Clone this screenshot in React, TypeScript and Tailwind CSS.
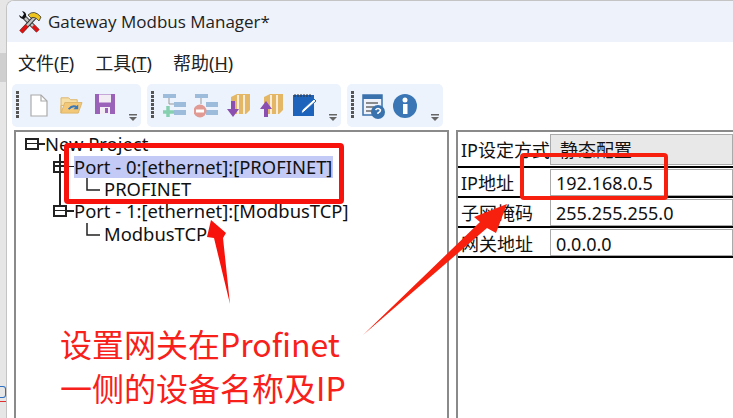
const cjk = '"Noto Sans", "Noto Sans CJK SC", sans-serif'

function Grip() {
  return (
    <div className="flex flex-col gap-[1.500px] shrink-0">
      {[0, 1, 2, 3, 4, 5, 6].map((i) => (
        <div key={i} className="w-[3px] h-[2.500px] bg-[#555]" />
      ))}
    </div>
  )
}

function More() {
  return (
    <svg viewBox="0 0 9 8" className="absolute right-[3px] bottom-[5px] w-[9px] h-[8px]">
      <rect x="0" y="0" width="8" height="1.500" fill="#666" />
      <path d="M0 3h8l-4 4z" fill="#666" />
    </svg>
  )
}

function Toolbar({ className, children }: { className: string; children: React.ReactNode }) {
  return (
    <div className={`relative flex items-start h-[43px] pl-[4px] pt-[7px] rounded-[5px] bg-[#ecf3fc] ${className}`}>
      <Grip />
      {children}
      <More />
    </div>
  )
}

function TreeBox() {
  return (
    <span className="relative inline-block w-[14px] h-[12px] border-2 border-[#222] shrink-0">
      <span className="absolute left-0 right-0 top-[2.500px] h-[1.500px] bg-[#222]" />
    </span>
  )
}

function Row({ label, value, first, last }: { label: string; value: string; first?: boolean; last?: boolean }) {
  return (
    <div className={`flex border-b-2 border-black items-stretch ${first ? 'h-[36px] pt-[2px] pb-[1px]' : 'h-[30px] pt-[1px]'}`}>
      <div className={`w-[92px] pl-[3px] text-[18px] leading-[24px] text-[#111] whitespace-nowrap self-center ${last ? 'pt-[3px]' : ''}`}>{label}</div>
      <div className={`flex-1 border border-[#aaa] text-[18px] leading-[24px] flex items-center text-[#111] ${first ? 'bg-[#e8e8e8] pl-[9px]' : 'pl-[5px]'} ${last ? 'pt-[3px]' : ''}`}>
        {value}
      </div>
    </div>
  )
}

export default function App() {
  return (
    <div className="relative w-[733px] h-[418px] overflow-hidden bg-[#e6e6e6] pl-[6px]" style={{ fontFamily: cjk }}>
      {/* Whatever sits behind the window on the left edge */}
      <div className="absolute left-0 top-[53px] w-[6px] h-[29px] bg-[#cfcfcf]" />
      <div className="absolute left-0 top-[386px] w-[6px] h-[12px] border-y border-r border-[#2f6fc0] rounded-r-[3px]" />
      <div className="absolute left-0 top-[401px] w-[6px] h-[1px] bg-[#e03030]" />

      <div className="relative w-[727px] h-[418px] bg-white rounded-tl-[8px] overflow-hidden flex flex-col border-l border-t border-[#c4c4c4]">
        {/* Title bar */}
        <div className="h-[41px] shrink-0 bg-[#eef3fb] flex items-center pl-[11px] gap-[6px]">
          <svg viewBox="0 0 24 24" className="w-[24px] h-[24px]">
            <path d="M6 7 L20 21" stroke="#333" strokeWidth="4.500" />
            <path d="M6 7 L20 21" stroke="#c4c4c4" strokeWidth="2.500" />
            <path d="M15 16 L20 21" stroke="#e01010" strokeWidth="3.500" />
            <path d="M3 22 L17 7" stroke="#333" strokeWidth="4.500" />
            <path d="M3 22 L17 7" stroke="#c4c4c4" strokeWidth="2.500" />
            <path d="M3 22 L9 15.500" stroke="#e01010" strokeWidth="3.500" />
            <path d="M10 5 Q16 -1 23 7 L21 11 Q17 6 13 8z" fill="#eec520" stroke="#333" strokeWidth="0.8" />
            <path d="M1 5 L4 7 L6 4 L4 1 Q9 2 8 7 L6 9 Q2 9 1 5z" fill="#111" />
          </svg>
          <span className="text-[17px] text-[#222]" style={{ fontFamily: '"Open Sans", sans-serif' }}>Gateway Modbus Manager*</span>
        </div>
        {/* Menu */}
        <div className="h-[42px] shrink-0 flex items-center pl-[11px] gap-[21px] text-[18px] text-[#222]">
          <span className="whitespace-nowrap">文件(<u>F</u>)</span>
          <span className="whitespace-nowrap">工具(<u>T</u>)</span>
          <span className="whitespace-nowrap">帮助(<u>H</u>)</span>
        </div>
        {/* Toolbars */}
        <div className="h-[44px] shrink-0 flex gap-[6px] pl-[5px]">
          <Toolbar className="w-[129px]">
            <div className="flex items-start gap-[12px] ml-[11px] mt-[3px]">
              <svg viewBox="0 0 18 23" className="w-[18px] h-[23px]">
                <path d="M1 1h10l6 6v15H1z" fill="#fff" stroke="#aaa" strokeWidth="1.200" />
                <path d="M11 1v6h6" fill="none" stroke="#aaa" strokeWidth="1.200" />
              </svg>
              <svg viewBox="0 0 24 22" className="w-[23px] h-[21px]">
                <path d="M1 20V4h8l2 2h7v6H1z" fill="#f7dfa8" stroke="#dcb56a" />
                <path d="M1 20l4-11h18l-4 11z" fill="#f3c879" stroke="#dcb56a" />
                <path d="M9 16q4-5 9-2" fill="none" stroke="#3b78b8" strokeWidth="2" />
                <path d="M19 11v5h-5z" fill="#3b78b8" />
              </svg>
              <svg viewBox="0 0 20 20" className="w-[20px] h-[20px]">
                <path d="M0 0h20v20H0z" fill="#9a62b8" />
                <rect x="4" y="0.500" width="12" height="8" fill="#f2ecf5" />
                <rect x="5" y="13" width="10" height="7" fill="#f2ecf5" />
                <rect x="10" y="14" width="3" height="5" fill="#9a62b8" />
              </svg>
            </div>
          </Toolbar>
          <Toolbar className="w-[194px]">
            <div className="flex items-start gap-[8px] ml-[8px] mt-[3px]">
              <svg viewBox="0 0 24 24" className="w-[24px] h-[24px]">
                <rect x="1" y="0" width="13" height="4" fill="#9dbcdc" />
                <rect x="12" y="8" width="12" height="5" fill="#9dbcdc" />
                <rect x="12" y="16" width="12" height="5" fill="#9dbcdc" />
                <path d="M7 4v6h5" fill="none" stroke="#999" />
                <path d="M6 12v11M1 18h11" stroke="#86d0b0" strokeWidth="3.500" />
              </svg>
              <svg viewBox="0 0 24 24" className="w-[24px] h-[24px]">
                <rect x="1" y="0" width="13" height="4" fill="#9dbcdc" />
                <rect x="12" y="8" width="12" height="5" fill="#9dbcdc" />
                <rect x="12" y="16" width="12" height="5" fill="#9dbcdc" />
                <path d="M7 4v6" stroke="#999" />
                <circle cx="6" cy="17" r="6.500" fill="#e29a94" />
                <rect x="2" y="15.500" width="8" height="3" fill="#fff" />
              </svg>
              <svg viewBox="0 0 25 24" className="w-[25px] h-[24px]">
                <path d="M5 3l6-3h13v16l-4 4H5z" fill="#e3b765" />
                <path d="M12 1v19M18 1v19" stroke="#fff" strokeWidth="1.500" />
                <path d="M9 7v8h4l-6 8-6-8h4V7z" fill="#8a4fb0" />
              </svg>
              <svg viewBox="0 0 25 24" className="w-[25px] h-[24px]">
                <path d="M5 3l6-3h13v16l-4 4H5z" fill="#e3b765" />
                <path d="M12 1v19M18 1v19" stroke="#fff" strokeWidth="1.500" />
                <path d="M9 23v-8h4L7 7l-6 8h4v8z" fill="#8a4fb0" />
              </svg>
              <svg viewBox="0 0 24 24" className="w-[24px] h-[24px]">
                <rect x="1" y="1" width="21" height="21" fill="#1d63bb" />
                <path d="M3 0v3M6 0v3M9 0v3M12 0v3M15 0v3M18 0v3" stroke="#333" />
                <path d="M9 20l1-4 12-11 2 2-12 11z" fill="#fff" stroke="#1d63bb" />
              </svg>
            </div>
          </Toolbar>
          <Toolbar className="w-[96px]">
            <div className="flex items-start gap-[8px] ml-[7px] mt-[3px]">
              <svg viewBox="0 0 24 25" className="w-[24px] h-[25px]">
                <rect x="2" y="1" width="19" height="20" fill="#eef3fb" stroke="#3a72ad" strokeWidth="1.500" />
                <rect x="2" y="1" width="19" height="4" fill="#3a72ad" />
                <path d="M5 9h12M5 13h8M5 17h6" stroke="#6a6a6a" strokeWidth="1.500" />
                <circle cx="17" cy="18" r="7" fill="#3a72ad" />
                <path d="M14.500 16q2.500-3 5 0 0 2-2.500 3v1" fill="none" stroke="#fff" strokeWidth="1.600" />
              </svg>
              <svg viewBox="0 0 24 24" className="w-[24px] h-[24px]">
                <circle cx="12" cy="12" r="12" fill="#3a76b5" />
                <circle cx="12" cy="6" r="2.500" fill="#fff" />
                <rect x="10" y="10" width="4.500" height="10" fill="#fff" />
              </svg>
            </div>
          </Toolbar>
        </div>
        {/* Panels */}
        <div className="flex-1 flex gap-[7px] pl-[7px] pt-[2px]">
          <div className="w-[435px] border-2 border-[#8a8a8a] border-b-0 pt-[1px] pl-[9px] text-[18.400px] leading-[22px] text-[#111]">
            <div className="flex items-center h-[22px]">
              <TreeBox />
              <span className="w-[6px] h-[1.500px] bg-[#222] shrink-0" />
              <span className="whitespace-nowrap">New Project</span>
            </div>
            <div className="relative">
              <span className="absolute left-[34px] -top-[1px] h-[52px] w-[1.500px] bg-[#222]" />
              <div className="relative flex items-center h-[23px] pl-[28px]">
                <TreeBox />
                <span className="w-[7px] h-[1.500px] bg-[#222] shrink-0" />
                <span className="bg-[#c3caf5] pr-[1px] whitespace-nowrap">Port - 0:[ethernet]:[PROFINET]</span>
              </div>
              <div className="flex items-center h-[22px] pl-[79px]">PROFINET</div>
              <div className="relative flex items-center h-[22px] pl-[28px]">
                <TreeBox />
                <span className="w-[7px] h-[1.500px] bg-[#222] shrink-0" />
                <span className="whitespace-nowrap">Port - 1:[ethernet]:[ModbusTCP]</span>
              </div>
              <div className="flex items-center h-[23px] pl-[79px]">ModbusTCP</div>
            </div>
          </div>
          <div className="flex-1 border-2 border-[#8a8a8a] border-r-0 border-b-0">
            <Row first label="IP设定方式" value="静态配置" />
            <Row label="IP地址" value="192.168.0.5" />
            <Row label="子网掩码" value="255.255.255.0" />
            <Row last label="网关地址" value="0.0.0.0" />
          </div>
        </div>
      </div>

      {/* Tree elbows, red callouts */}
      <svg viewBox="0 0 733 418" className="absolute inset-0 w-[733px] h-[418px] pointer-events-none">
        <path d="M87 178v12h13M87 223v12h13" fill="none" stroke="#222" strokeWidth="1.500" />
        <polygon points="211,220 226,233 223,238 230,304 214,238 207,237" fill="#f7120c" />
        <polygon points="507,204 496,233 487,228 363,335 480,222 474,217" fill="#f7200f" />
      </svg>
      <div className="absolute left-[64px] top-[143px] w-[280px] h-[61px] border-[5px] border-[#f7120c] rounded-[4px]" />
      <div className="absolute left-[520px] top-[153px] w-[148px] h-[47px] border-[4px] border-[#f7200f] rounded-[4px]" />
      <div className="absolute left-[60px] top-[321px] text-[32px] leading-[44px] text-[#f8201a] whitespace-nowrap" style={{ fontFamily: '"Noto Sans CJK SC", sans-serif' }}>
        <div>设置网关在Profinet</div>
        <div>一侧的设备名称及IP</div>
      </div>
    </div>
  )
}
